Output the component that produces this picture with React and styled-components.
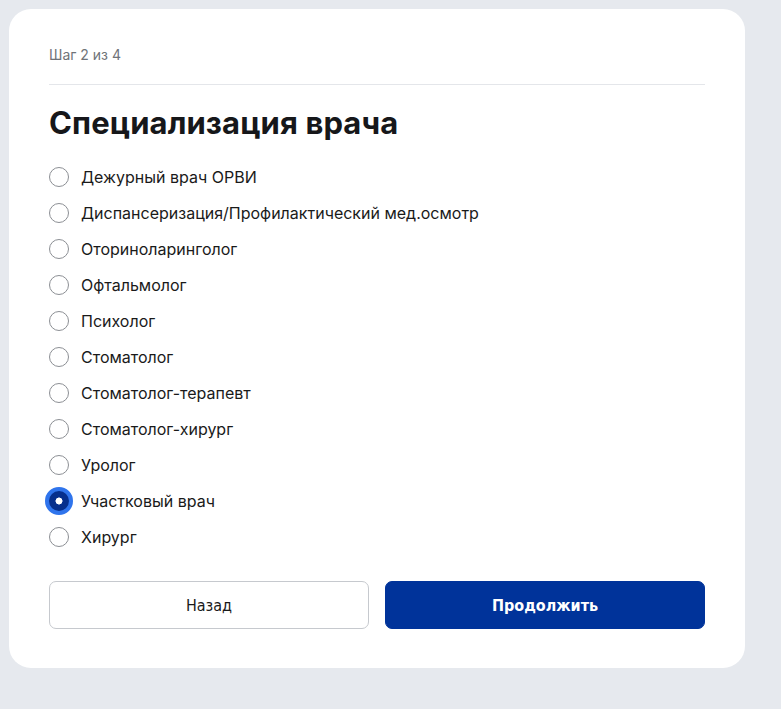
import React, { useState } from 'react';
import styled, { createGlobalStyle } from 'styled-components';

const colors = {
    page: '#e6e9ee',
    card: '#ffffff',
    text: '#1a1a1a',
    muted: '#6f7378',
    divider: '#e4e6ea',
    radio: '#8c8f94',
    primary: '#00339a',
    primary_dark: '#062f8c',
    focus: '#2f74ec',
    border: '#c6c9ce',
};

const specialities = [
    'Дежурный врач ОРВИ',
    'Диспансеризация/Профилактический мед.осмотр',
    'Оториноларинголог',
    'Офтальмолог',
    'Психолог',
    'Стоматолог',
    'Стоматолог-терапевт',
    'Стоматолог-хирург',
    'Уролог',
    'Участковый врач',
    'Хирург',
];

const GlobalStyle = createGlobalStyle`
    * {
        box-sizing: border-box;
    }
    body {
        margin: 0;
        background: ${colors.page};
        font-family: Inter, "Noto Sans", sans-serif;
        color: ${colors.text};
    }
`;

export default function App() {
    const [selected, setSelected] = useState('Участковый врач');

    return (
        <Page>
            <GlobalStyle />
            <Card>
                <Step>Шаг 2 из 4</Step>
                <Divider />
                <Title>Специализация врача</Title>
                <Options>
                    {specialities.map(name => (
                        <Option key={name} onClick={() => setSelected(name)}>
                            <RadioSlot>
                                <Radio checked={selected === name} />
                            </RadioSlot>
                            <Label>{name}</Label>
                        </Option>
                    ))}
                </Options>
                <Actions>
                    <Button type="button">Назад</Button>
                    <Button type="button" primary>Продолжить</Button>
                </Actions>
            </Card>
        </Page>
    );
}

const Page = styled.div`
    min-height: 709px;
    padding: 9px 36px 40px 9px;
`;

const Card = styled.div`
    width: 736px;
    background: ${colors.card};
    border-radius: 22px;
    padding: 38px 40px 39px 40px;
    display: flex;
    flex-direction: column;
`;

const Step = styled.div`
    font-size: 14px;
    line-height: 16px;
    color: ${colors.muted};
`;

const Divider = styled.div`
    height: 1px;
    background: ${colors.divider};
    margin: 21px 0 19px 0;
`;

const Title = styled.h1`
    margin: 0 0 17px 0;
    font-size: 31px;
    line-height: 38px;
    font-weight: 700;
    letter-spacing: 0.1px;
    color: #16171a;
`;

const Options = styled.ul`
    list-style: none;
    margin: 0;
    padding: 0;
    display: flex;
    flex-direction: column;
`;

const Option = styled.li`
    height: 36px;
    display: flex;
    align-items: center;
    cursor: pointer;
`;

const RadioSlot = styled.span`
    width: 20px;
    height: 20px;
    margin-right: 12px;
    display: flex;
    align-items: center;
    justify-content: center;
    flex-shrink: 0;
`;

const Radio = styled.span`
    display: block;
    flex-shrink: 0;
    border-radius: 50%;
    width: ${props => props.checked ? '28px' : '20px'};
    height: ${props => props.checked ? '28px' : '20px'};
    border: ${props => props.checked ? `4px solid ${colors.focus}` : `1px solid ${colors.radio}`};
    background: ${props => props.checked
        ? `radial-gradient(circle, #fff 0 3.2px, ${colors.primary_dark} 3.8px)`
        : '#fff'};
`;

const Label = styled.span`
    font-size: 16px;
    line-height: 20px;
    color: ${colors.text};
`;

const Actions = styled.div`
    display: grid;
    grid-template-columns: 1fr 1fr;
    gap: 16px;
    margin-top: 26px;
`;

const Button = styled.button`
    height: 48px;
    border-radius: 7px;
    font-family: "Liberation Sans Narrow", "DejaVu Sans Condensed", "Liberation Sans", sans-serif;
    font-size: 16px;
    font-weight: ${props => props.primary ? 700 : 400};
    color: ${props => props.primary ? '#fff' : colors.text};
    background: ${props => props.primary ? colors.primary : '#fff'};
    border: 1px solid ${props => props.primary ? colors.primary : colors.border};
    cursor: pointer;
`;
